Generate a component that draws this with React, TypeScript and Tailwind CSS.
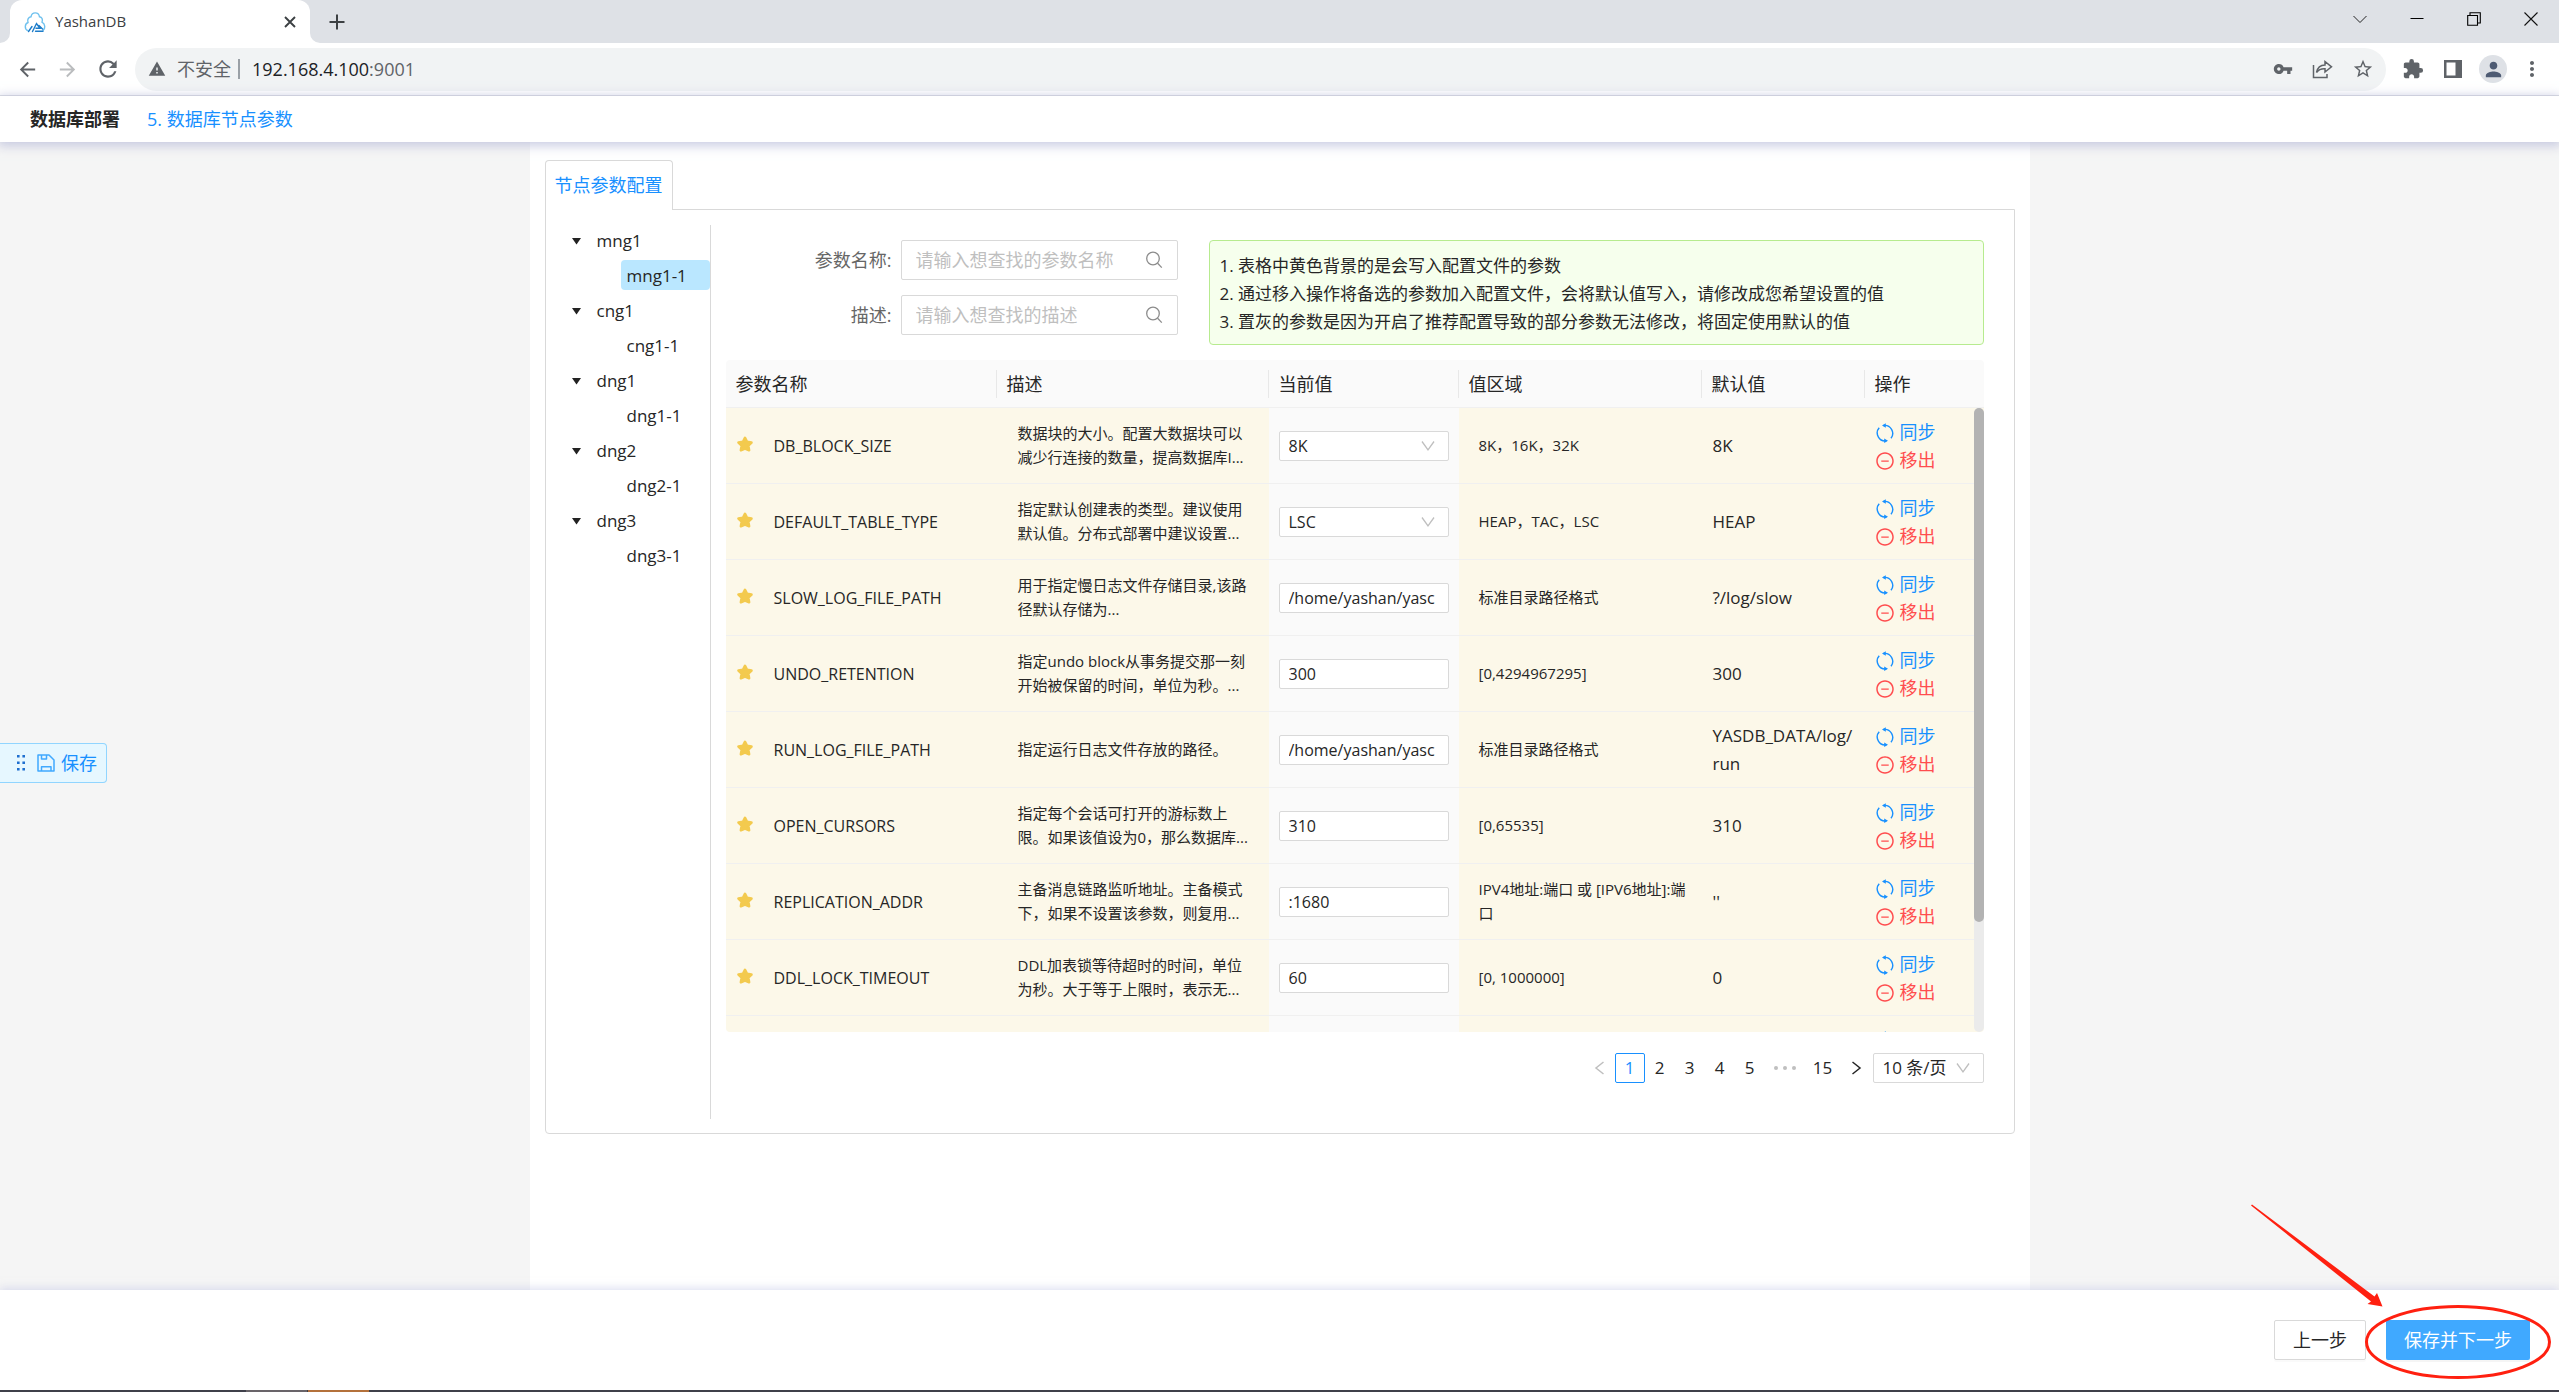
import React from 'react';
import { MdVpnKey, MdStarBorder, MdExtension, MdPerson, MdMoreVert, MdWarning, MdRefresh, MdArrowBack, MdArrowForward } from 'react-icons/md';
import { AiOutlineMinusCircle } from 'react-icons/ai';

interface Param {
  name: string;
  desc: string[];
  value: string;
  options?: string[];
  range: string;
  def: string;
}

const params: Param[] = [
  { name: 'DB_BLOCK_SIZE', desc: ['数据块的大小。配置大数据块可以', '减少行连接的数量，提高数据库I...'], value: '8K', options: ['8K', '16K', '32K'], range: '8K，16K，32K', def: '8K' },
  { name: 'DEFAULT_TABLE_TYPE', desc: ['指定默认创建表的类型。建议使用', '默认值。分布式部署中建议设置...'], value: 'LSC', options: ['HEAP', 'TAC', 'LSC'], range: 'HEAP，TAC，LSC', def: 'HEAP' },
  { name: 'SLOW_LOG_FILE_PATH', desc: ['用于指定慢日志文件存储目录,该路', '径默认存储为...'], value: '/home/yashan/yasc', range: '标准目录路径格式', def: '?/log/slow' },
  { name: 'UNDO_RETENTION', desc: ['指定undo block从事务提交那一刻', '开始被保留的时间，单位为秒。...'], value: '300', range: '[0,4294967295]', def: '300' },
  { name: 'RUN_LOG_FILE_PATH', desc: ['指定运行日志文件存放的路径。'], value: '/home/yashan/yasc', range: '标准目录路径格式', def: 'YASDB_DATA/log/run' },
  { name: 'OPEN_CURSORS', desc: ['指定每个会话可打开的游标数上', '限。如果该值设为0，那么数据库...'], value: '310', range: '[0,65535]', def: '310' },
  { name: 'REPLICATION_ADDR', desc: ['主备消息链路监听地址。主备模式', '下，如果不设置该参数，则复用...'], value: ':1680', range: 'IPV4地址:端口 或 [IPV6地址]:端口', def: "''" },
  { name: 'DDL_LOCK_TIMEOUT', desc: ['DDL加表锁等待超时的时间，单位', '为秒。大于等于上限时，表示无...'], value: '60', range: '[0, 1000000]', def: '0' },
];

const groups = ['mng1', 'cng1', 'dng1', 'dng2', 'dng3'];

const notes = [
  '1. 表格中黄色背景的是会写入配置文件的参数',
  '2. 通过移入操作将备选的参数加入配置文件，会将默认值写入，请修改成您希望设置的值',
  '3. 置灰的参数是因为开启了推荐配置导致的部分参数无法修改，将固定使用默认的值',
];

const columns = ['参数名称', '描述', '当前值', '值区域', '默认值', '操作'];

const Logo = () => (
  <svg width="22" height="22" viewBox="0 0 22 22" fill="none" strokeWidth="1.4" strokeLinecap="round">
    <path d="M3.500 19.500C.5 18 .5 13 4 11.500C3 8.500 4.500 6 7 5.800C8 .6 14.500 .6 15.500 5.800C18 6 19 8.500 18 11.200C21.500 13 21.500 17.500 19 19.500" stroke="#6fc1ee" />
    <path d="M4.500 20.500L8 15.500M8.500 20.500L12.500 12.500L15 16M12 17.300H16.500M11.500 20.300H19M15 14.500L18.500 18" stroke="#1d7cc9" />
  </svg>
);

const SyncIcon = () => (
  <svg width="20" height="20" viewBox="0 0 20 20" fill="none" stroke="currentColor" strokeWidth="1.400">
    <path d="M8.500 2.500A8 8 0 0 1 16 15.300" />
    <path d="M11.500 17.800A8 8 0 0 1 4.200 4.700" />
    <path d="M7 2.500L10.800 .2V4.800ZM13 17.700L9.200 15.400V20Z" fill="currentColor" stroke="none" />
  </svg>
);

const StarIcon = () => (
  <svg width="18" height="20" viewBox="0 0 18 20" className="shrink-0" fill="#f3ca4e" stroke="#f3ca4e" strokeWidth="2.600" strokeLinejoin="round">
    <path d="M9 1.800L11 5.900L15.500 6.500L12.300 9.700L13.100 14.200L9 12.600L4.900 14.200L5.700 9.700L2.500 6.500L7 5.900Z" />
  </svg>
);

const SearchIcon = () => (
  <svg width="18" height="18" viewBox="0 0 18 18" className="shrink-0" fill="none" stroke="#8c8c8c" strokeWidth="1.300">
    <circle cx="8" cy="7.500" r="6.300" />
    <path d="M12.600 12.300L16.800 16.600" />
  </svg>
);

const DownIcon = () => (
  <svg width="14" height="14" viewBox="0 0 14 14" className="pointer-events-none absolute right-[14px] top-2 text-[#bfbfbf]" fill="none" stroke="currentColor" strokeWidth="1.300">
    <path d="M1 2.500L7 10.800L13 2.500" />
  </svg>
);

const SaveIcon = () => (
  <svg width="18" height="18" viewBox="0 0 18 18" className="ml-[12px] mr-[6px]" fill="none" stroke="#40a9ff" strokeWidth="1.500" strokeLinejoin="round">
    <path d="M1 1H12L17 6V17H1ZM4.500 1V5H9.500V1M4.500 17V12.800H14V17" />
  </svg>
);

const TabStrip = () => (
  <div className="flex h-[43px] items-center justify-between bg-[#dee1e6] pl-[10px]">
    <div className="flex h-full items-center">
      <div className="relative flex h-full w-[300px] items-center rounded-t-xl bg-white pl-[14px] pr-[10px] text-[#3c4043]">
        <svg className="absolute bottom-0 -left-[10px]" width="10" height="10" viewBox="0 0 10 10"><path d="M10 0V10H0A10 10 0 0 0 10 0" fill="#fff" /></svg>
        <svg className="absolute bottom-0 -right-[10px]" width="10" height="10" viewBox="0 0 10 10"><path d="M0 0V10H10A10 10 0 0 1 0 0" fill="#fff" /></svg>
        <Logo />
        <span className="ml-[9px] flex-1 text-[15px]">YashanDB</span>
        <button aria-label="关闭标签页" className="flex h-5 w-5 items-center justify-center">
          <svg width="12" height="12" viewBox="0 0 12 12" stroke="#3c4043" strokeWidth="1.9"><path d="M1 1L11 11M11 1L1 11" /></svg>
        </button>
      </div>
      <button aria-label="新标签页" className="ml-[17px] flex h-5 w-5 items-center justify-center">
        <svg width="16" height="16" viewBox="0 0 16 16" stroke="#3c4043" strokeWidth="2"><path d="M8 .5V15.500M.5 8H15.500" /></svg>
      </button>
    </div>
    <div className="flex h-[37px] items-center self-start">
      <button aria-label="搜索标签页" className="flex w-[57px] justify-center">
        <svg width="14" height="14" viewBox="0 0 14 14" fill="none" stroke="#222"><path d="M.5 4L7 10.500L13.500 4" /></svg>
      </button>
      <button aria-label="最小化" className="flex w-[57px] justify-center">
        <svg width="14" height="14" viewBox="0 0 14 14" stroke="#000"><path d="M.5 6.500H13.500" /></svg>
      </button>
      <button aria-label="还原" className="flex w-[57px] justify-center">
        <svg width="14" height="14" viewBox="0 0 14 14" fill="none" stroke="#000" strokeWidth="1.1"><path d="M.7 3.500H10.500V13.300H.7ZM3 3.500V.7H13.300V11H10.500" /></svg>
      </button>
      <button aria-label="关闭" className="flex w-[57px] justify-center">
        <svg width="14" height="14" viewBox="0 0 14 14" stroke="#111" strokeWidth="1.1"><path d="M.5 .5L13.500 13.500M13.500 .5L.5 13.500" /></svg>
      </button>
    </div>
  </div>
);

const Toolbar = () => (
  <div className="flex h-[53px] items-center border-b border-[#dadce0] bg-white pl-[16px] pr-[15px] text-[#5f6368]">
    <button aria-label="后退"><MdArrowBack size={23} /></button>
    <button aria-label="前进" className="ml-[17px] text-[#babcbe]"><MdArrowForward size={23} /></button>
    <button aria-label="重新加载" className="ml-[16px]"><MdRefresh size={26} /></button>
    <div className="ml-[14px] flex h-[43px] flex-1 items-center rounded-full bg-[#f1f3f4] pl-[13px] pr-[12px]">
      <MdWarning size={18} />
      <span className="ml-[11px] text-[18px]">不安全</span>
      <span className="mx-[7px] h-5 w-[2px] bg-[#9aa0a6]" />
      <span className="ml-[5px] flex-1 text-[18px] text-[#202124]">192.168.4.100<span className="text-[#5f6368]">:9001</span></span>
      <div className="flex items-center gap-[19px]">
        <button aria-label="密码"><MdVpnKey size={20} /></button>
        <button aria-label="分享">
          <svg width="21" height="20" viewBox="0 0 21 20" fill="none" stroke="currentColor" strokeWidth="1.500">
            <path d="M1.500 6V18.500H15V15M4.500 13.500C5.500 8.500 9 6 13 6V2.500L19.500 7.800L13 13V9.800C9.500 9.600 6.500 10.800 4.500 13.500Z" />
          </svg>
        </button>
        <button aria-label="收藏"><MdStarBorder size={22} /></button>
      </div>
    </div>
    <div className="ml-[16px] flex items-center">
      <button aria-label="扩展程序"><MdExtension size={22} /></button>
      <button aria-label="侧边栏" className="ml-[20px]">
        <svg width="18" height="18" viewBox="0 0 18 18"><path d="M0 0H18V18H0ZM2.500 2.500V15.500H11.500V2.500Z" fill="currentColor" fillRule="evenodd" /></svg>
      </button>
      <button aria-label="用户" className="ml-[17px] flex h-[28px] w-[28px] items-center justify-center rounded-full bg-[#dee1e6] text-[#4e5b73]"><MdPerson size={23} /></button>
      <button aria-label="更多" className="ml-[13px]"><MdMoreVert size={24} /></button>
    </div>
  </div>
);

const NodeTree = () => (
  <ul className="w-[165px] shrink-0 border-r border-[#d9d9d9] text-[17px]">
    {groups.map((g, i) => (
      <li key={g}>
        <div className="mb-[5px] flex h-[30px] items-center pl-[26px] pt-px">
          <svg width="9" height="8" viewBox="0 0 9 8"><path d="M0 1H9L4.500 7.500Z" fill="#222" /></svg>
          <span className="ml-[16px]">{g}</span>
        </div>
        <ul>
          <li className={`mb-[5px] ml-[75px] flex h-[30px] items-center rounded-sm pl-[6px] pt-px ${i === 0 ? 'bg-[#bae7ff]' : ''}`}>{g}-1</li>
        </ul>
      </li>
    ))}
  </ul>
);

const SearchField = ({ id, label, placeholder }: { id: string; label: string; placeholder: string }) => (
  <div className="flex items-center justify-end">
    <label htmlFor={id} className="mr-[9px] text-[18px] text-[#666]">{label}:</label>
    <div className="flex h-10 w-[277px] items-center rounded-xs border border-[#d9d9d9] px-[14px]">
      <input id={id} placeholder={placeholder} className="w-full min-w-0 text-[18px] outline-none placeholder:text-[#bfbfbf]" />
      <SearchIcon />
    </div>
  </div>
);

const Actions = () => (
  <div className="flex flex-col pt-[2px] text-[18px]">
    <button className="flex h-7 items-center gap-[5px] text-[#1890ff]"><SyncIcon />同步</button>
    <button className="flex h-7 items-center gap-[5px] text-[#ff4d4f]"><AiOutlineMinusCircle size={20} />移出</button>
  </div>
);

const ParamRow = ({ p }: { p: Param }) => (
  <tr className="h-[76px] bg-[#fcf8e9] *:border-b *:border-[#f0f0f0]">
    <td className="pl-[10px] text-base">
      <div className="flex items-center gap-[20px]">
        <StarIcon />
        {p.name}
      </div>
    </td>
    <td className="whitespace-nowrap pb-[2px] pl-[21px] text-[15px] leading-6">
      {p.desc.map(line => <div key={line}>{line}</div>)}
    </td>
    <td className="bg-[#fafafa] px-[10px] text-base">
      {p.options ? (
        <div className="relative">
          <select aria-label={p.name} defaultValue={p.value} className="block h-[30px] w-full appearance-none rounded-xs border border-[#d9d9d9] bg-white px-[9px] outline-none">
            {p.options.map(o => <option key={o}>{o}</option>)}
          </select>
          <DownIcon />
        </div>
      ) : (
        <input aria-label={p.name} defaultValue={p.value} className="block h-[30px] w-full rounded-xs border border-[#d9d9d9] bg-white px-[9px] outline-none" />
      )}
    </td>
    <td className="break-all pb-[2px] pl-5 pr-2 text-[15px] leading-6">{p.range}</td>
    <td className="break-words pl-[11px] pr-2 leading-7">{p.def}</td>
    <td className="pl-[10px]"><Actions /></td>
  </tr>
);

const ParamTable = () => (
  <div className="relative mt-[15px] h-[672px] overflow-hidden rounded-sm">
    <table className="w-full table-fixed border-separate border-spacing-0 text-left text-[17px]">
      <colgroup>
        <col className="w-[271px]" />
        <col className="w-[272px]" />
        <col className="w-[190px]" />
        <col className="w-[243px]" />
        <col className="w-[163px]" />
        <col />
      </colgroup>
      <thead>
        <tr className="h-12 bg-[#fafafa] text-[18px]">
          {columns.map((c, i) => (
            <th key={c} className="border-b border-[#f0f0f0] font-normal">
              <div className={`flex h-7 items-center pl-[10px] pt-[2px] ${i < 5 ? 'border-r border-[#e8e8e8]' : ''}`}>{c}</div>
            </th>
          ))}
        </tr>
      </thead>
      <tbody>
        {params.map(p => <ParamRow key={p.name} p={p} />)}
        <tr className="h-[76px] bg-[#fcf8e9]">
          <td />
          <td />
          <td className="bg-[#fafafa]" />
          <td />
          <td />
          <td className="pl-[10px]"><Actions /></td>
        </tr>
      </tbody>
    </table>
    <div className="absolute bottom-0 right-0 top-12 w-[10px] rounded-full bg-[#ebebeb]">
      <div className="h-[514px] rounded-full bg-[#b3b3b3]" />
    </div>
  </div>
);

const Pagination = () => (
  <nav className="mt-[21px] flex h-[30px] items-center justify-end text-[17px]">
    <button aria-label="上一页" className="flex w-[30px] justify-center">
      <svg width="14" height="14" viewBox="0 0 14 14" fill="none" stroke="#bfbfbf" strokeWidth="1.500"><path d="M10.500 1L3 7L10.500 13" /></svg>
    </button>
    <button className="h-[30px] w-[30px] rounded-xs border border-[#1890ff] text-[#1890ff]">1</button>
    {['2', '3', '4', '5'].map(n => <button key={n} className="h-[30px] w-[30px]">{n}</button>)}
    <span className="flex w-10 justify-center gap-[5px]">
      <i className="h-1 w-1 rounded-full bg-[#bfbfbf]" />
      <i className="h-1 w-1 rounded-full bg-[#bfbfbf]" />
      <i className="h-1 w-1 rounded-full bg-[#bfbfbf]" />
    </span>
    <button className="h-[30px] w-[36px]">15</button>
    <button aria-label="下一页" className="flex w-[30px] justify-center">
      <svg width="14" height="14" viewBox="0 0 14 14" fill="none" stroke="#262626" strokeWidth="1.500"><path d="M3.500 1L11 7L3.500 13" /></svg>
    </button>
    <div className="relative ml-[2px]">
      <select aria-label="每页条数" className="block h-[30px] w-[111px] appearance-none rounded-xs border border-[#d9d9d9] bg-white pl-[9px] outline-none">
        <option>10 条/页</option>
      </select>
      <DownIcon />
    </div>
  </nav>
);

export default function App() {
  return (
    <div className="relative flex min-h-screen flex-col bg-[#f5f5f5] font-['Open_Sans','Noto_Sans_CJK_SC',sans-serif] text-[#262626]">
      <TabStrip />
      <Toolbar />
      <header className="relative z-10 flex h-[46px] items-center gap-[27px] bg-white pl-[30px] text-[18px] shadow-[0_2px_10px_2px_rgba(180,184,215,0.7)]">
        <h1 className="font-bold">数据库部署</h1>
        <span className="text-[#1890ff]">5. 数据库节点参数</span>
      </header>

      <main className="mx-auto w-full max-w-[1500px] flex-1 bg-white px-[15px] pt-[18px]">
        <button className="relative z-10 -mb-px flex h-[50px] items-center rounded-t border border-b-0 border-[#d9d9d9] bg-white px-[9px] text-[18px] text-[#1890ff]">节点参数配置</button>
        <div className="flex min-h-[925px] rounded-b border border-[#d9d9d9] pb-[14px] pt-[15px]">
          <NodeTree />
          <div className="min-w-0 flex-1 pl-[15px] pr-[30px] pt-[15px]">
            <div className="flex gap-[31px]">
              <div className="flex w-[452px] flex-col gap-[15px]">
                <SearchField id="param-name" label="参数名称" placeholder="请输入想查找的参数名称" />
                <SearchField id="param-desc" label="描述" placeholder="请输入想查找的描述" />
              </div>
              <div className="h-[105px] flex-1 rounded-sm border border-[#b7eb8f] bg-[#f6ffed] px-[10px] py-[11px] text-[17px] leading-7">
                {notes.map(n => <p key={n}>{n}</p>)}
              </div>
            </div>
            <ParamTable />
            <Pagination />
          </div>
        </div>
      </main>

      <footer className="relative z-10 bg-white shadow-[0_-2px_8px_rgba(190,194,230,0.5)]">
        <div className="flex h-[100px] justify-end gap-5 pr-[29px] pt-[30px] text-[18px]">
          <button className="h-10 w-[92px] rounded-xs border border-[#d9d9d9] shadow-[0_2px_0_rgba(0,0,0,0.02)]">上一步</button>
          <button className="h-10 w-[144px] rounded-xs bg-[#40a9ff] text-white shadow-[0_2px_0_rgba(0,0,0,0.04)]">保存并下一步</button>
        </div>
        {/* top edge of the taskbar */}
        <div className="flex h-[2px] bg-[#3f404a] pl-[246px]">
          <div className="w-[61px] bg-[#696469]" />
          <div className="ml-px w-[61px] bg-[#b4713b]" />
        </div>
      </footer>

      {/* floating save handle */}
      <button className="absolute left-0 top-[743px] flex h-10 w-[107px] items-center rounded-r border border-l-0 border-[#91d5ff] bg-[#e6f7ff] pl-[17px] text-[18px] text-[#1890ff]">
        <svg width="8" height="16" viewBox="0 0 8 16" fill="#1e6fd0">
          <path d="M0 0h2.600v2.600h-2.600zM5.400 0h2.600v2.600h-2.600zM0 6.500h2.600v2.600h-2.600zM5.400 6.500h2.600v2.600h-2.600zM0 13h2.600v2.600h-2.600zM5.400 13h2.600v2.600h-2.600z" />
        </svg>
        <SaveIcon />
        保存
      </button>

      {/* red pointer over the next button */}
      <svg className="pointer-events-none absolute bottom-0 right-0 z-20" width="320" height="200" viewBox="0 0 320 200">
        <path d="M12 13.500L13 12.500L135.500 104.500L138 101L143.500 114.500L128.500 112L132 109.500Z" fill="#ff2010" />
        <ellipse cx="219" cy="150" rx="91.500" ry="35.500" fill="none" stroke="#ff2010" strokeWidth="3" />
      </svg>
    </div>
  );
}
